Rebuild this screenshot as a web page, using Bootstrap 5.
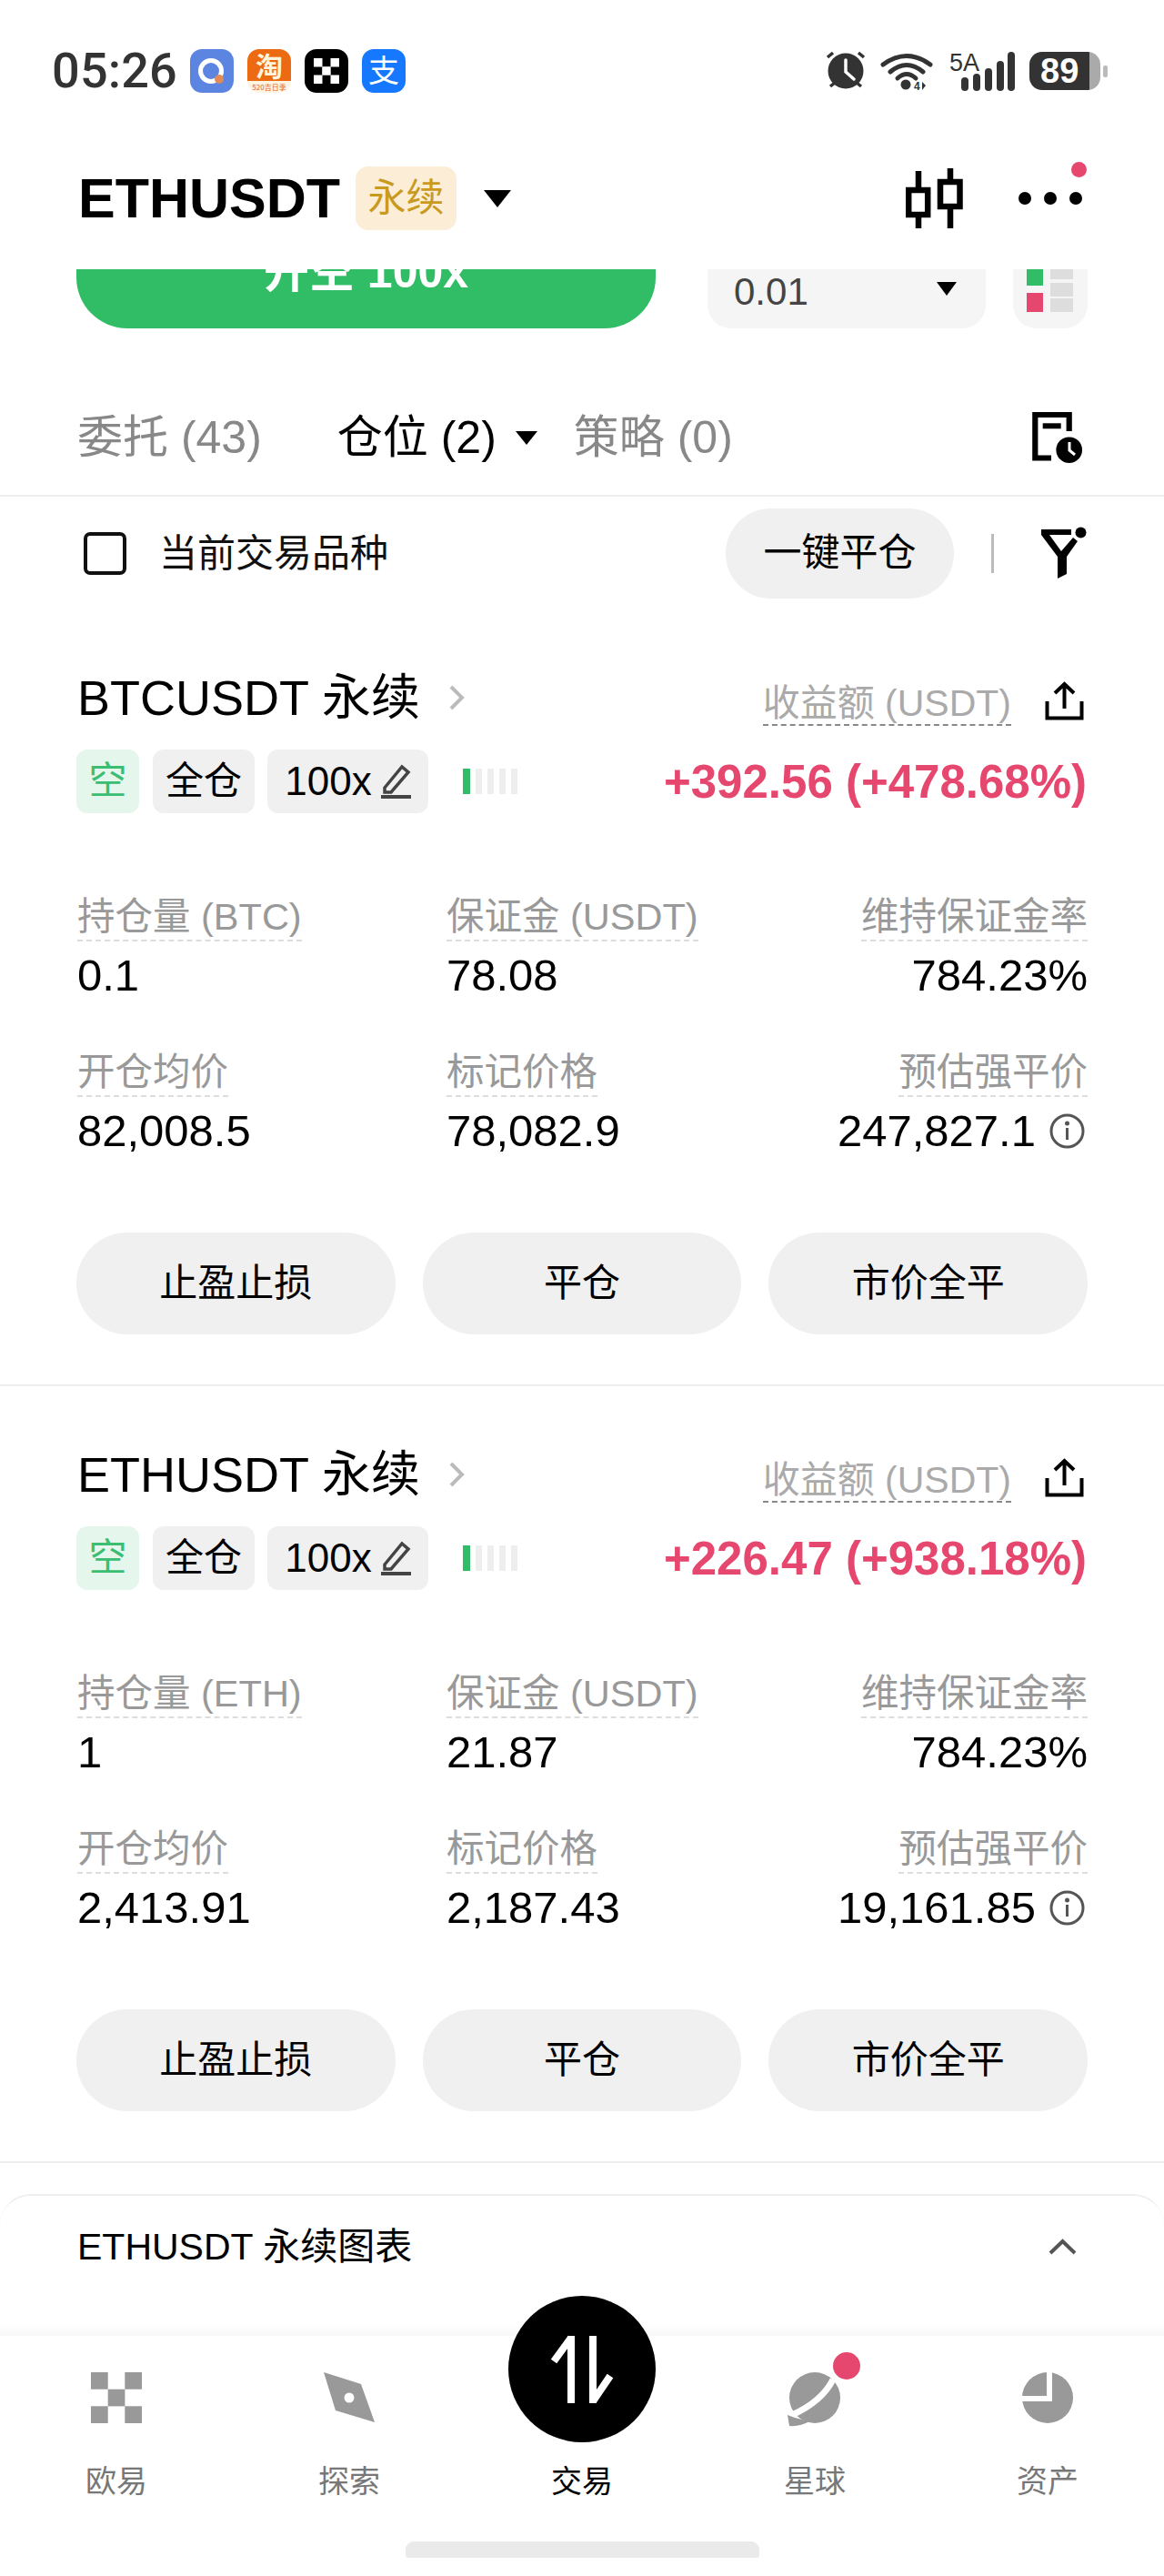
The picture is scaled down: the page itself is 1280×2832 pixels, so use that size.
<!DOCTYPE html>
<html lang="zh">
<head>
<meta charset="utf-8">
<title>ETHUSDT</title>
<link href="https://cdn.jsdelivr.net/npm/bootstrap@5.3.0/dist/css/bootstrap.min.css" rel="stylesheet">
<style>
html,body{margin:0;background:#fff}
body{font-family:"Liberation Sans","Noto Sans CJK SC",sans-serif;color:#000;width:1280px;height:2832px;overflow:hidden}
.screen{position:relative;width:1280px;height:2832px;overflow:hidden;background:#fff}
svg{display:block;flex:none}
.sbar{height:156px;padding:0 62px 0 57px}
.clock{font:500 54px/1 Roboto,sans-serif;color:#333;width:148px;letter-spacing:.2px}
.app{width:48px;height:48px;border-radius:13px;overflow:hidden}
.app-gap{gap:15px}
.app-alipay{background:#1677ff;color:#fff;font-size:34px;line-height:48px;text-align:center}
.batt{width:78px;height:42px;border-radius:14px;overflow:hidden;background:linear-gradient(90deg,#333 0,#333 66px,#aaa 66px);color:#fff;font:700 38px/42px "Liberation Sans",sans-serif;padding-left:12px}
.nub{width:5px;height:13px;background:#bbb;border-radius:2px;margin-left:3px}
.hdr{height:140px;padding:0 90px 16px 86px}
.sym{font-size:61px;font-weight:700;line-height:1}
.perp{width:111px;height:70px;margin-left:17px;border-radius:14px;background:#fbedd6;color:#c99a1e;font-size:42px;line-height:70px;text-align:center}
.tri-lg{width:0;height:0;border-left:15px solid transparent;border-right:15px solid transparent;border-top:19px solid #000;margin-left:30px}
.tri-md{width:0;height:0;border-left:12px solid transparent;border-right:12px solid transparent;border-top:15px solid #000}
.hicons{gap:61px}
.more{position:relative;width:70px;height:14px;gap:14px}
.more i{width:14px;height:14px;border-radius:50%;background:#000}
.reddot{position:absolute;width:17px;height:17px;background:#e6476e;border-radius:50%;top:-33px;right:-5px}
.clip{height:65px;overflow:hidden;padding:0 84px}
.clip>div{height:65px}
.openbtn{width:637px;background:#31bd65;color:#fff;border-radius:0 0 56px 56px;font-size:50px;font-weight:700;line-height:1;text-align:center;margin-right:57px}
.openbtn span{display:block;margin-top:-22px}
.sizebox{width:306px;background:#f5f5f5;border-radius:0 0 26px 26px;padding:0 32px 0 29px;color:#444;font-size:42px;margin-right:30px}
.sizebox span{line-height:1;margin-top:-15px}
.sizebox .tri-md{border-left-width:11px;border-right-width:11px;margin-top:-22px}
.bookbox{width:82px;background:#f5f5f5;border-radius:0 0 26px 26px}
.tabs{height:185px;padding:57px 90px 0 85px;border-bottom:2px solid #eee;font-size:50px}
.tab-off{color:#888}
.tab-on{margin-left:83px}
.tabs .tri-md{margin:0 40px 0 21px}
.filters{height:124px;padding:0 85px 0 92px}
.form-check-input.chk{width:47px;height:47px;margin:0;border:4px solid #111;border-radius:7px;box-shadow:none;flex:none}
.chk-lbl{font-size:42px;margin-left:36px;color:#111}
.closeall{width:251px;height:99px;background:#f0f0f0;font-size:42px;color:#000;padding:0;border:0;line-height:1}
.vsep{width:3px;height:43px;background:#bbb;margin:0 52px 0 41px}
.pos{height:854px;padding:67px 84px 0;border-bottom:2px solid #eee}
.pos-head{height:60px}
.pos-title{font-size:54px;line-height:60px;padding-left:1px}
.chev{margin-left:32px}
.pnl-lbl{display:inline-block;font-size:41px;line-height:46px;color:#aaa;border-bottom:2px dashed #888;margin-right:37px;margin-top:14px}
.share{margin-top:6px}
.tagrow{height:70px;margin-top:27px}
.tg{height:70px;border-radius:12px;background:#f0f0f0;font-size:42px;line-height:70px;text-align:center}
.tg-short{width:69px;background:#e5f6ec;color:#3bbd72}
.tg-cross{width:112px;margin-left:15px}
.tg-lev{width:177px;margin-left:14px;gap:10px;font-size:44px}
.lev-bars{margin-left:38px;gap:6px}
.lev-bars i{width:7px;height:28px;background:#eee}
.lev-bars i.on{width:8px;background:#31bd65}
.pnl{font-size:51px;font-weight:700;line-height:1;color:#e6476e;margin-right:1px}
.stats{display:grid;grid-template-columns:406px 1fr auto;margin-top:89px;row-gap:58px;padding-left:1px}
.stat-cell:nth-child(3n){text-align:right}
.stat-lbl{display:inline-block;font-size:41.5px;line-height:50px;color:#999;border-bottom:2px dashed #ddd}
.stat-val{font-size:49px;line-height:48px;margin-top:13px}
.stat-val.with-info{gap:15px;padding-right:3px}
.acts{gap:30px;margin-top:88px}
.act{flex:1 1 0;height:112px;background:#f0f0f0;color:#000;border:0;font-size:42px;line-height:1;padding:0}
.sheet{margin-top:34px;height:440px;border-top:2px solid #eee;border-radius:34px 34px 0 0;padding:0 96px 0 85px}
.sheet-row{height:112px;font-size:41px;line-height:1}
.bnav{position:absolute;left:0;right:0;bottom:0;height:264px;background:#fff}
.bnav::before{content:"";position:absolute;left:0;right:0;top:-15px;height:15px;background:linear-gradient(#fff,#f8f8f8)}
.tabs5{display:grid;grid-template-columns:repeat(5,1fr);padding-top:40px}
.nit{display:flex;flex-direction:column;align-items:center;color:#777;font-size:34px;line-height:40px}
.nit .nico{height:60px}
.nit .nlbl{margin-top:40px}
.nit.on{color:#000}
.swap{position:absolute;left:559px;top:-44px;width:162px;height:161px;border-radius:50%;background:#000}
.homebar{width:389px;height:18px;background:#eaeaea;border-radius:9px 9px 3px 3px;margin-top:46px}
.reddot-nav{position:absolute;width:30px;height:30px;left:916px;top:18px;border-radius:50%;background:#e6476e}
</style>
</head>
<body>
<div class="screen">

  <div class="sbar d-flex align-items-center">
    <div class="clock">05:26</div>
    <div class="d-flex app-gap ms-1">
      <div class="app"><svg width="48" height="48" viewBox="0 0 48 48"><rect width="48" height="48" fill="#5b85e0"/><circle cx="23" cy="24" r="11.500" fill="none" stroke="#fff" stroke-width="5"/><path d="M18 18l12 12" stroke="#5b85e0" stroke-width="3"/><circle cx="32" cy="33" r="5" fill="#e08a5a"/></svg></div>
      <div class="app"><svg width="48" height="48" viewBox="0 0 48 48"><rect width="48" height="48" fill="#fff3e2"/><rect width="48" height="35" fill="#ec6a12"/><text x="24" y="30" font-size="30" font-weight="700" fill="#fff4dc" text-anchor="middle" font-family="Noto Sans CJK SC">淘</text><text x="24" y="45" font-size="8" fill="#d9622a" text-anchor="middle" font-family="Noto Sans CJK SC">520吉日季</text></svg></div>
      <div class="app"><svg width="48" height="48" viewBox="0 0 48 48"><rect width="48" height="48" fill="#000"/><g fill="#fff"><rect x="10" y="10" width="9.500" height="9.500"/><rect x="28.500" y="10" width="9.500" height="9.500"/><rect x="19.200" y="19.200" width="9.500" height="9.500"/><rect x="10" y="28.500" width="9.500" height="9.500"/><rect x="28.500" y="28.500" width="9.500" height="9.500"/></g></svg></div>
      <div class="app app-alipay">支</div>
    </div>
    <div class="ms-auto d-flex align-items-center">
      <svg width="44" height="44" viewBox="0 0 44 44"><circle cx="22" cy="22" r="19.500" fill="#333"/><path d="M22 10v13l9 8" fill="none" stroke="#fff" stroke-width="3.500" stroke-linecap="round"/><path d="M2 7l6-5M42 7l-6-5M5 39l5-4M39 39l-5-4" stroke="#333" stroke-width="3.500"/></svg>
      <svg class="ms-3" width="60" height="44" viewBox="0 0 60 44"><g fill="none" stroke="#333" stroke-width="5" stroke-linecap="round"><path d="M3 15Q29-4 55 15"/><path d="M11 23Q29 8 47 23"/><path d="M19 30Q29 21 39 30"/></g><circle cx="28" cy="37" r="5.500" fill="#333"/><text x="37" y="43" font-size="12" font-weight="700" fill="#333" font-family="Liberation Sans">4</text><path d="M46 43v-9l4 4z" fill="#333"/></svg>
      <svg class="ms-3" width="72" height="46" viewBox="0 0 72 46"><text x="0" y="23" font-size="27" fill="#333" font-family="Liberation Sans">5A</text><g fill="#333"><rect x="13" y="30" width="8" height="15" rx="4"/><rect x="26" y="26" width="8" height="19" rx="4"/><rect x="39" y="20" width="8" height="25" rx="4"/><rect x="52" y="12" width="8" height="33" rx="4"/><rect x="64" y="2" width="8" height="43" rx="4"/></g></svg>
      <div class="batt ms-3 d-flex align-items-center">89</div>
      <div class="nub"></div>
    </div>
  </div>

  <div class="hdr d-flex align-items-center">
    <div class="sym">ETHUSDT</div>
    <div class="perp">永续</div>
    <div class="tri-lg"></div>
    <div class="ms-auto d-flex align-items-center hicons">
      <svg width="63" height="66" viewBox="0 0 63 66"><g fill="none" stroke="#000" stroke-width="6.500"><path d="M14 3v19M14 54v12"/><rect x="3.200" y="24" width="21" height="27"/><path d="M49 0v12M49 45v21"/><rect x="38" y="15" width="21.500" height="27"/></g></svg>
      <div class="more d-flex"><i></i><i></i><i></i><span class="reddot"></span></div>
    </div>
  </div>

  <div class="clip d-flex">
    <div class="openbtn"><span>开空 100x</span></div>
    <div class="sizebox d-flex align-items-center justify-content-between"><span>0.01</span><div class="tri-md"></div></div>
    <div class="bookbox"><svg width="82" height="65" viewBox="0 0 82 65"><rect x="15" y="0" width="18" height="18" fill="#31bd65"/><rect x="15" y="26" width="18" height="21" fill="#e6476e"/><g fill="#ddd"><rect x="41" y="0" width="25" height="11"/><rect x="41" y="15" width="25" height="15"/><rect x="41" y="32" width="25" height="15"/></g></svg></div>
  </div>

  <div class="tabs d-flex align-items-center">
    <span class="tab-off">委托 (43)</span>
    <span class="tab-on">仓位 (2)</span>
    <div class="tri-md"></div>
    <span class="tab-off">策略 (0)</span>
    <svg class="ms-auto" width="55" height="56" viewBox="0 0 55 56"><path d="M40.700 21V3H3.300V50.500H21" fill="none" stroke="#000" stroke-width="6.200"/><rect x="11.700" y="12.300" width="20" height="6" fill="#000"/><circle cx="40.700" cy="41.700" r="14.300" fill="#000"/><path d="M41 33v9l6 5" fill="none" stroke="#fff" stroke-width="3"/></svg>
  </div>

  <div class="filters d-flex align-items-center">
    <input class="form-check-input chk" type="checkbox" aria-label="当前交易品种">
    <span class="chk-lbl">当前交易品种</span>
    <button class="btn rounded-pill closeall ms-auto" type="button">一键平仓</button>
    <div class="vsep"></div>
    <svg width="50" height="59" viewBox="0 0 50 59"><path d="M0 3H33V9H9L22 27L35 12L40 16L28 33V52L18 57V33L0 9Z" fill="#000"/><circle cx="43.500" cy="6.500" r="6" fill="#000"/></svg>
  </div>

  <section class="pos">
    <div class="pos-head d-flex align-items-center">
      <span class="pos-title">BTCUSDT 永续</span>
      <svg class="chev" width="17" height="28" viewBox="0 0 17 28"><path d="M2 2l12 12L2 26" fill="none" stroke="#bbb" stroke-width="4"/></svg>
      <span class="pnl-lbl ms-auto">收益额 (USDT)</span>
      <svg class="share me-1" width="43" height="43" viewBox="0 0 43 43"><path d="M2.500 22V40.500H40.500V22M21.500 30V3M11 13L21.500 3L32 13" fill="none" stroke="#000" stroke-width="4"/></svg>
    </div>
    <div class="tagrow d-flex align-items-center">
      <div class="tg tg-short">空</div>
      <div class="tg tg-cross">全仓</div>
      <div class="tg tg-lev d-flex align-items-center justify-content-center">100x <svg width="33" height="38" viewBox="0 0 33 38"><path d="M4 26L23 3L30 9L11 31H4Z" fill="none" stroke="#444" stroke-width="3.500"/><rect x="0" y="34" width="33" height="4" fill="#444"/></svg></div>
      <div class="lev-bars d-flex"><i class="on"></i><i></i><i></i><i></i><i></i></div>
      <div class="pnl ms-auto">+392.56 (+478.68%)</div>
    </div>
    <div class="stats">
      <div class="stat-cell"><span class="stat-lbl">持仓量 (BTC)</span><div class="stat-val">0.1</div></div>
      <div class="stat-cell"><span class="stat-lbl">保证金 (USDT)</span><div class="stat-val">78.08</div></div>
      <div class="stat-cell"><span class="stat-lbl">维持保证金率</span><div class="stat-val">784.23%</div></div>
      <div class="stat-cell"><span class="stat-lbl">开仓均价</span><div class="stat-val">82,008.5</div></div>
      <div class="stat-cell"><span class="stat-lbl">标记价格</span><div class="stat-val">78,082.9</div></div>
      <div class="stat-cell"><span class="stat-lbl">预估强平价</span><div class="stat-val with-info d-flex justify-content-end align-items-center">247,827.1<svg width="39" height="39" viewBox="0 0 39 39"><circle cx="19.500" cy="19.500" r="17.500" fill="none" stroke="#555" stroke-width="3"/><circle cx="19.500" cy="11" r="2.500" fill="#555"/><rect x="18" y="16" width="3" height="13" fill="#555"/></svg></div></div>
    </div>
    <div class="acts d-flex">
      <button class="btn rounded-pill act" type="button">止盈止损</button>
      <button class="btn rounded-pill act" type="button">平仓</button>
      <button class="btn rounded-pill act" type="button">市价全平</button>
    </div>
  </section>

  <section class="pos">
    <div class="pos-head d-flex align-items-center">
      <span class="pos-title">ETHUSDT 永续</span>
      <svg class="chev" width="17" height="28" viewBox="0 0 17 28"><path d="M2 2l12 12L2 26" fill="none" stroke="#bbb" stroke-width="4"/></svg>
      <span class="pnl-lbl ms-auto">收益额 (USDT)</span>
      <svg class="share me-1" width="43" height="43" viewBox="0 0 43 43"><path d="M2.500 22V40.500H40.500V22M21.500 30V3M11 13L21.500 3L32 13" fill="none" stroke="#000" stroke-width="4"/></svg>
    </div>
    <div class="tagrow d-flex align-items-center">
      <div class="tg tg-short">空</div>
      <div class="tg tg-cross">全仓</div>
      <div class="tg tg-lev d-flex align-items-center justify-content-center">100x <svg width="33" height="38" viewBox="0 0 33 38"><path d="M4 26L23 3L30 9L11 31H4Z" fill="none" stroke="#444" stroke-width="3.500"/><rect x="0" y="34" width="33" height="4" fill="#444"/></svg></div>
      <div class="lev-bars d-flex"><i class="on"></i><i></i><i></i><i></i><i></i></div>
      <div class="pnl ms-auto">+226.47 (+938.18%)</div>
    </div>
    <div class="stats">
      <div class="stat-cell"><span class="stat-lbl">持仓量 (ETH)</span><div class="stat-val">1</div></div>
      <div class="stat-cell"><span class="stat-lbl">保证金 (USDT)</span><div class="stat-val">21.87</div></div>
      <div class="stat-cell"><span class="stat-lbl">维持保证金率</span><div class="stat-val">784.23%</div></div>
      <div class="stat-cell"><span class="stat-lbl">开仓均价</span><div class="stat-val">2,413.91</div></div>
      <div class="stat-cell"><span class="stat-lbl">标记价格</span><div class="stat-val">2,187.43</div></div>
      <div class="stat-cell"><span class="stat-lbl">预估强平价</span><div class="stat-val with-info d-flex justify-content-end align-items-center">19,161.85<svg width="39" height="39" viewBox="0 0 39 39"><circle cx="19.500" cy="19.500" r="17.500" fill="none" stroke="#555" stroke-width="3"/><circle cx="19.500" cy="11" r="2.500" fill="#555"/><rect x="18" y="16" width="3" height="13" fill="#555"/></svg></div></div>
    </div>
    <div class="acts d-flex">
      <button class="btn rounded-pill act" type="button">止盈止损</button>
      <button class="btn rounded-pill act" type="button">平仓</button>
      <button class="btn rounded-pill act" type="button">市价全平</button>
    </div>
  </section>

  <section class="sheet">
    <div class="sheet-row d-flex align-items-center justify-content-between">
      <span>ETHUSDT 永续图表</span>
      <svg width="31" height="18" viewBox="0 0 31 18"><path d="M2 16L15.500 3L29 16" fill="none" stroke="#555" stroke-width="4"/></svg>
    </div>
  </section>

  <nav class="bnav">
    <div class="tabs5">
      <div class="nit">
        <div class="nico"><svg width="56" height="56" viewBox="0 0 56 56" fill="#999"><rect width="18.700" height="18.700"/><rect x="37.300" width="18.700" height="18.700"/><rect x="18.700" y="18.700" width="18.700" height="18.700"/><rect y="37.300" width="18.700" height="18.700"/><rect x="37.300" y="37.300" width="18.700" height="18.700"/></svg></div>
        <div class="nlbl">欧易</div>
      </div>
      <div class="nit">
        <div class="nico"><svg width="56" height="56" viewBox="0 0 56 56"><path d="M0 0L41 13L56 55L13 42Z" fill="#999"/><circle cx="28" cy="28" r="5.500" fill="#fff"/></svg></div>
        <div class="nlbl">探索</div>
      </div>
      <div class="nit on">
        <div class="nico"></div>
        <div class="nlbl">交易</div>
      </div>
      <div class="nit">
        <div class="nico"><svg width="60" height="60" viewBox="0 0 60 60"><circle cx="30" cy="28" r="28" fill="#999"/><path d="M50 8Q38 32 5 47" fill="none" stroke="#fff" stroke-width="7"/><path d="M0 47L2 59Q14 60 24 54L8 50Z" fill="#999"/></svg></div>
        <div class="nlbl">星球</div>
      </div>
      <div class="nit">
        <div class="nico"><svg width="56" height="56" viewBox="0 0 56 56"><circle cx="28" cy="28" r="28" fill="#999"/><path d="M30 0V29H0" fill="none" stroke="#fff" stroke-width="6"/></svg></div>
        <div class="nlbl">资产</div>
      </div>
    </div>
    <div class="swap d-flex align-items-center justify-content-center">
      <svg width="162" height="161" viewBox="0 0 162 161"><path d="M69 44V118M69 46L50 72M93 44V118M93 116L112 88" fill="none" stroke="#fff" stroke-width="8"/></svg>
    </div>
    <span class="reddot-nav"></span>
    <div class="d-flex justify-content-center"><div class="homebar"></div></div>
  </nav>
</div>
<script src="https://cdn.jsdelivr.net/npm/bootstrap@5.3.0/dist/js/bootstrap.bundle.min.js"></script>
</body>
</html>
